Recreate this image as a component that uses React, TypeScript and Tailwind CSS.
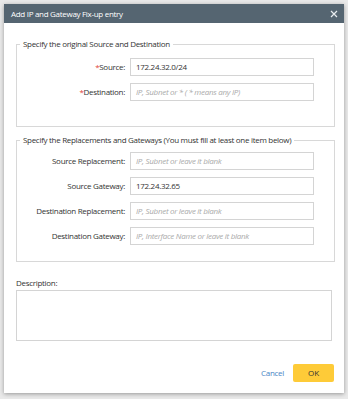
import React from "react";

const font = { fontFamily: '"Open Sans", "Noto Sans", sans-serif' };

function Row({ label, required, value, placeholder }: { label: string; required?: boolean; value?: string; placeholder?: string }) {
  return (
    <>
      <div className="flex items-center justify-end text-[8px] tracking-[-0.3px] text-[#333] h-[18px]">
        {required && <span className="text-[#e0403a]">*</span>}
        {label}:
      </div>
      <div className="h-[18px] border border-[#d4d4d4] bg-white flex items-center px-[5px] text-[8px] tracking-[-0.3px]">
        {value ? (
          <span className="text-[#333]">{value}</span>
        ) : (
          <span className="text-[#aaa] italic">{placeholder}</span>
        )}
      </div>
    </>
  );
}

export default function App() {
  return (
    <div className="w-[348px] h-[399px] bg-[#e9e9e9] p-[4px] pb-[6px]" style={font}>
      <div className="w-[340px] h-[389px] bg-white flex flex-col shadow-[0_1px_4px_rgba(0,0,0,0.35)]">
        <div className="h-[19px] bg-[#556571] flex items-center justify-between pl-[7px] pr-[6px] text-white text-[8px] tracking-[-0.3px]">
          <span>Add IP and Gateway Fix-up entry</span>
          <svg width="8" height="8" viewBox="0 0 8 8">
            <path d="M1 1L7 7M7 1L1 7" stroke="#e8ecef" strokeWidth="1.2" />
          </svg>
        </div>
        <div className="flex flex-col px-[12px] pt-[15px]">
          <fieldset className="border border-[#d8d8d8] pl-0 pr-[20px] pt-[8px] pb-[25px]">
            <legend className="ml-[3px] px-[3px] text-[8px] tracking-[-0.3px] text-[#333] whitespace-nowrap">Specify the original Source and Destination</legend>
            <div className="grid grid-cols-[108px_184px] gap-x-[5px] gap-y-[7px]">
              <Row label="Source" required value="172.24.32.0/24" />
              <Row label="Destination" required placeholder="IP, Subnet or * ( * means any IP)" />
            </div>
          </fieldset>
          <fieldset className="mt-[7px] border border-[#d8d8d8] pl-0 pr-[20px] pt-[6px] pb-[16px]">
            <legend className="ml-[3px] px-[3px] text-[8px] tracking-[-0.3px] text-[#333] whitespace-nowrap">
              Specify the Replacements and Gateways (You must fill at least one item below)
            </legend>
            <div className="grid grid-cols-[108px_184px] gap-x-[5px] gap-y-[7px]">
              <Row label="Source Replacement" placeholder="IP, Subnet or leave it blank" />
              <Row label="Source Gateway" value="172.24.32.65" />
              <Row label="Destination Replacement" placeholder="IP, Subnet or leave it blank" />
              <Row label="Destination Gateway" placeholder="IP, Interface Name or leave  it blank" />
            </div>
          </fieldset>
          <div className="mt-[15px] text-[8px] tracking-[-0.3px] text-[#333] leading-[12px]">Description:</div>
          <div className="mt-[1px] h-[51px] border border-[#d4d4d4]"></div>
        </div>
        <div className="flex-1"></div>
        <div className="flex items-center justify-end gap-[9px] px-[10px] pb-[11px]">
          <span className="text-[8px] tracking-[-0.3px] text-[#4a86c5]">Cancel</span>
          <div className="w-[41px] h-[18px] rounded-[2px] bg-[#fecb38] flex items-center justify-center text-[8px] text-[#333]">OK</div>
        </div>
      </div>
    </div>
  );
}
